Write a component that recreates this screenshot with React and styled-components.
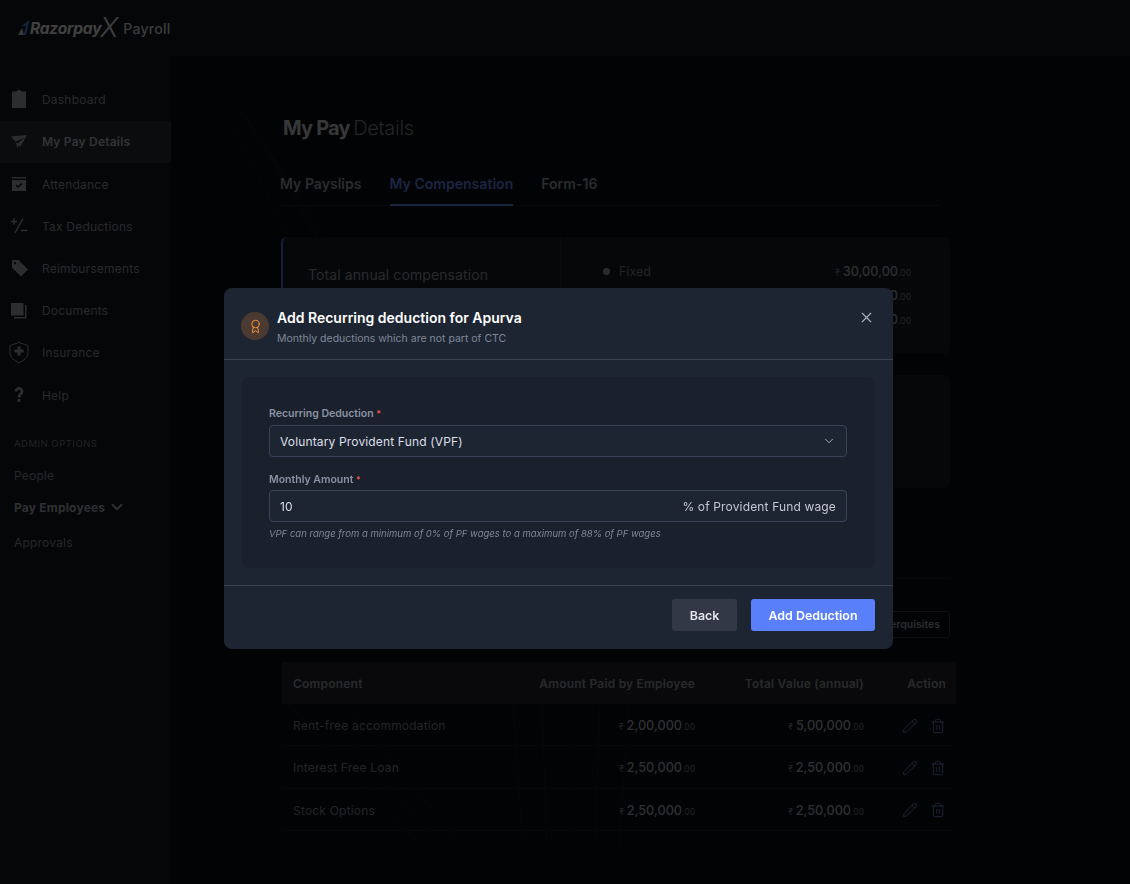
import styled, { createGlobalStyle } from 'styled-components';
import { ChevronDown, Pencil, Trash2, X, Award } from 'lucide-react';

const GlobalStyle = createGlobalStyle`
	html, body {
		margin: 0;
		padding: 0;
		background: #080c14;
		font-family: Inter, "Liberation Sans", sans-serif;
	}
	* {
		box-sizing: border-box;
	}
`;

const Page = styled.div`
	width: 1130px;
	height: 884px;
	overflow: hidden;
	display: flex;
	flex-direction: column;
	background: #080c14;
	color: #a8acb4;
`;

const TopBar = styled.header`
	height: 56px;
	flex: none;
	display: flex;
	align-items: center;
	gap: 6px;
	padding-left: 18px;
	background: #141820;
`;

const Brand = styled.div`
	display: flex;
	align-items: center;
	color: #fff;
	font-size: 15.5px;
	font-weight: 700;
	font-style: italic;
	letter-spacing: -0.2px;
`;

const BrandX = styled.span`
	font-size: 27px;
	font-weight: 300;
	line-height: 20px;
	letter-spacing: -1px;
	margin-left: -1px;
`;

const Product = styled.span`
	color: #e4e6ea;
	font-size: 14px;
	font-weight: 500;
	letter-spacing: 0.3px;
`;

const Body = styled.div`
	flex: 1;
	display: flex;
	min-height: 0;
`;

const Sidebar = styled.nav`
	width: 171px;
	flex: none;
	padding-top: 22.6px;
	background: #141820;
`;

const NavRow = styled.div`
	height: 42.2px;
	display: flex;
	align-items: center;
	gap: 15px;
	padding-left: 11px;
	font-size: 12px;
	letter-spacing: 0.2px;
	font-weight: ${(props) => (props.$active ? 600 : 400)};
	background: ${(props) => (props.$active ? '#2c3038' : 'transparent')};
	color: ${(props) => (props.$active ? '#c4c8d0' : '#a0a4ac')};

	& svg {
		width: 16px;
		height: 16px;
		flex: none;
		color: #b0b4bc;
	}
`;

const AdminTitle = styled.div`
	margin: 22px 0 10px 14px;
	font-size: 9.5px;
	letter-spacing: 0.5px;
	color: #888c94;
`;

const AdminLink = styled.div`
	display: flex;
	align-items: center;
	gap: 3px;
	height: ${(props) => props.$height || 32}px;
	padding-left: 14px;
	font-size: 12px;
	letter-spacing: 0.2px;
	font-weight: ${(props) => (props.$bold ? 700 : 400)};
	color: ${(props) => (props.$bold ? '#b8bcc4' : '#989ca4')};
`;

const Main = styled.main`
	flex: 1;
	padding: 58px 180px 0 110px;
	position: relative;
	min-width: 0;
`;

const Lines = styled.svg`
	position: absolute;
	left: 0;
	top: 0;
	width: 100%;
	height: 100%;
	pointer-events: none;
`;

const Title = styled.h1`
	position: relative;
	margin: 0 0 30px 2px;
	font-size: 20px;
	line-height: 28px;
	font-weight: 300;
	letter-spacing: -0.3px;
	word-spacing: -2px;
	color: #8c9098;

	& b {
		font-weight: 700;
		letter-spacing: -0.8px;
		word-spacing: 0;
		color: #d8dadf;
	}
`;

const Tabs = styled.div`
	position: relative;
	width: 660px;
	margin-left: -1px;
	display: flex;
	gap: 28px;
	border-bottom: 1px solid #22262e;
`;

const Tab = styled.div`
	height: 34px;
	padding-top: 2px;
	font-size: 14px;
	font-weight: 600;
	line-height: 20px;
	letter-spacing: 0.03px;
	margin-bottom: -1px;
	color: ${(props) => (props.$active ? '#6f90ff' : '#a8acb4')};
	border-bottom: 2px solid ${(props) => (props.$active ? '#6f90ff' : 'transparent')};
`;

const SummaryCard = styled.section`
	position: relative;
	width: 669px;
	height: 117px;
	margin-top: 31px;
	display: flex;
	background: #181c24;
	border-left: 2px solid #5a78e8;
	border-radius: 6px;
`;

const SummaryLabel = styled.div`
	width: 278px;
	padding: 28px 0 0 25px;
	font-size: 14px;
	line-height: 20px;
	letter-spacing: 0.1px;
	color: #a0a4ac;
	border-right: 1px solid #282c34;
	margin-bottom: 24px;
`;

const SummaryRows = styled.div`
	flex: 1;
	padding: 22px 39px 0 40px;
`;

const SummaryRow = styled.div`
	height: 24px;
	display: flex;
	align-items: center;
	gap: 9px;
	font-size: 12.5px;
	color: #8c9098;
`;

const Dot = styled.span`
	width: 7px;
	height: 7px;
	margin-left: 2px;
	border-radius: 50%;
	background: ${(props) => props.$color};
`;

const Money = styled.div`
	display: flex;
	align-items: baseline;
	justify-content: flex-end;
	margin-left: auto;
	font-size: 12.7px;
	font-weight: 500;
	letter-spacing: 0;
	color: #b8bcc4;

	& i {
		font-style: normal;
		font-size: 8.5px;
		font-weight: 400;
		color: #888c94;
	}

	& i:first-child {
		margin-right: 3px;
	}
`;

const DetailCard = styled.section`
	position: relative;
	width: 669px;
	height: 113px;
	margin-top: 21px;
	background: #181c24;
	border-radius: 6px;
`;

const Divider = styled.div`
	position: relative;
	width: 669px;
	margin-top: 90px;
	border-top: 1px solid #1c2028;
`;

const PerksBar = styled.div`
	position: relative;
	width: 669px;
	display: flex;
	justify-content: flex-end;
	margin-top: 32px;
`;

const OutlineButton = styled.div`
	height: 27px;
	padding: 0 9px;
	display: flex;
	align-items: center;
	font-size: 10.5px;
	font-weight: 600;
	color: #a8acb4;
	border: 1px solid #3c4048;
	border-radius: 3px;
`;

const Table = styled.div`
	position: relative;
	width: 674px;
	margin: 24px 0 0 1px;
`;

const TableRow = styled.div`
	height: 42.2px;
	display: grid;
	grid-template-columns: 234px 168px 169px 1fr;
	align-items: center;
	padding: 2px 10px 0 11px;
	font-size: 12px;
	letter-spacing: 0.2px;
	color: #8c9098;
	border-bottom: 1px solid #1a1e26;
`;

const HeadRow = styled(TableRow)`
	padding-top: 0;
	background: #24272e;
	border-bottom: 0;
	font-weight: 600;
	color: #a0a4ac;
`;

const Cell = styled.div`
	text-align: right;
`;

const ActionCell = styled.div`
	display: flex;
	justify-content: flex-end;
	align-items: center;
	gap: 12px;
	color: #6a8ad0;

	& svg {
		width: 16px;
		height: 16px;
	}
`;

const Backdrop = styled.div`
	position: fixed;
	inset: 0;
	background: rgba(0, 0, 0, 0.75);
	padding: 288px 0 0 224px;
`;

const Modal = styled.div`
	width: 669px;
	height: 361px;
	display: flex;
	flex-direction: column;
	background: #1e2532;
	border-radius: 8px;
	color: #fff;
`;

const ModalHead = styled.div`
	height: 72px;
	flex: none;
	display: flex;
	align-items: center;
	gap: 8px;
	padding: 8px 18px 0 17px;
	border-bottom: 1px solid #3a414e;
`;

const Badge = styled.div`
	width: 28px;
	height: 28px;
	flex: none;
	margin-top: -3px;
	display: flex;
	align-items: center;
	justify-content: center;
	border-radius: 50%;
	background: #4a3a32;
	color: #f0923c;
`;

const HeadText = styled.div`
	flex: 1;
`;

const ModalTitle = styled.div`
	font-size: 14px;
	font-weight: 600;
	line-height: 20px;
	color: #fff;
`;

const ModalSub = styled.div`
	margin-top: 3px;
	font-size: 10.5px;
	line-height: 16px;
	color: #7f8798;
`;

const CloseButton = styled.div`
	display: flex;
	margin: -20px 0 0;
	color: #aeb4c2;
`;

const ModalBody = styled.div`
	flex: 1;
	padding: 17px 18px;
`;

const Panel = styled.div`
	height: 191px;
	padding: 30px 28px 0 27px;
	background: #1a202c;
	border-radius: 8px;
`;

const Label = styled.div`
	margin-bottom: ${(props) => props.$gap}px;
	font-size: 10.5px;
	font-weight: 600;
	line-height: 13px;
	color: #8a92a3;

	& span {
		font-size: 9px;
		color: #e5534b;
	}
`;

const Field = styled.div`
	height: 32px;
	margin-bottom: ${(props) => props.$gap || 0}px;
	display: flex;
	align-items: center;
	justify-content: space-between;
	padding: 0 10px;
	font-size: 12px;
	letter-spacing: 0.15px;
	color: #dcdfe6;
	background: #1e2532;
	border: 1px solid #3a4358;
	border-radius: 4px;

	& svg {
		color: #b4b9c6;
	}
`;

const Suffix = styled.span`
	color: #c4c8d2;
`;

const Hint = styled.div`
	margin-top: 5px;
	font-size: 9.5px;
	font-style: italic;
	line-height: 13px;
	color: #7f8798;
`;

const ModalFoot = styled.div`
	height: 65px;
	flex: none;
	display: flex;
	justify-content: flex-end;
	gap: 14px;
	padding: 13px 18px 0 0;
	border-top: 1px solid #3a414e;
`;

const FootButton = styled.div`
	width: ${(props) => props.$width}px;
	height: 32px;
	display: flex;
	align-items: center;
	justify-content: center;
	font-size: 12.4px;
	font-weight: 600;
	border-radius: 3px;
	color: ${(props) => (props.$primary ? '#fff' : '#e3e6ec')};
	background: ${(props) => (props.$primary ? '#5a7ffb' : '#323846')};
`;

const LogoMark = () => (
	<svg width="12" height="16" viewBox="0 0 12 16" style={{ marginTop: -1 }}>
		<path d="M0 15 L4 8 L6 15 Z" fill="#d8dadf" />
		<path d="M3.5 6 L11.5 0 L8 15 L5.5 15 L8 6 Z" fill="#5a8cf0" />
	</svg>
);

const navIcons = {
	dashboard: (
		<svg viewBox="0 0 16 16" fill="currentColor" style={{ overflow: 'visible' }}>
			<path d="M1-.5h4L8-2.5l3 2h4V16H1Z" />
		</svg>
	),
	pay: (
		<svg viewBox="0 0 16 16" fill="currentColor">
			<path d="M0 2.5 16 1 9 13 6.5 9.5 13 4 4.5 7.5Z" />
			<path d="M4.5 8 6.5 14 8 10.5Z" />
		</svg>
	),
	attendance: (
		<svg viewBox="0 0 16 16" fill="currentColor">
			<path d="M1 1h14v1.5H1Z" />
			<path fillRule="evenodd" d="M1 4h14v11H1Zm3.5 5.5L7 12l4.5-4-1-1L7 10 5.5 8.5Z" />
		</svg>
	),
	tax: (
		<svg viewBox="0 0 16 16" fill="none" stroke="currentColor" strokeWidth="1.5">
			<path d="M0 3.5h6M3 .5v6M12 .5 4 15M10 12.5h6" />
		</svg>
	),
	tag: (
		<svg viewBox="0 0 16 16" fill="currentColor" style={{ overflow: 'visible' }}>
			<path d="M1 0h6.5L17 9.5 10 16.5 1 7.5Zm3 2a1.2 1.2 0 1 0 .01 0Z" />
		</svg>
	),
	documents: (
		<svg viewBox="0 0 16 16" fill="currentColor">
			<path d="M0 0h12.5v12.5H0Z" />
			<path d="M14 2h1.5v13.5H3V14h11Z" />
		</svg>
	),
	insurance: (
		<svg viewBox="0 0 16 16" style={{ overflow: 'visible' }}>
			<path
				d="M8-2.5 17 .5V8c0 4.5-4.5 7.5-9 10-4.5-2.5-9-5.5-9-10V.5Z"
				fill="none"
				stroke="currentColor"
				strokeWidth="1"
			/>
			<path d="M6.5 1.5h3v3h3v3h-3v3h-3v-3h-3v-3h3Z" fill="currentColor" />
		</svg>
	),
	help: (
		<svg viewBox="0 0 16 16" fill="none" stroke="currentColor" strokeWidth="2.8">
			<path d="M5 4.5a3 3 0 1 1 4.8 2.4C8.5 7.9 8 8.5 8 10.5" />
			<path d="M8 12v3" />
		</svg>
	),
};

const navItems = [
	{ key: 'dashboard', label: 'Dashboard' },
	{ key: 'pay', label: 'My Pay Details', active: true },
	{ key: 'attendance', label: 'Attendance' },
	{ key: 'tax', label: 'Tax Deductions' },
	{ key: 'tag', label: 'Reimbursements' },
	{ key: 'documents', label: 'Documents' },
	{ key: 'insurance', label: 'Insurance' },
	{ key: 'help', label: 'Help' },
];

const summaryRows = [
	{ label: 'Fixed', amount: '30,00,00', color: '#a8acb4' },
	{ label: 'Variable', amount: '5,00,00', color: '#6f90ff' },
	{ label: 'Perquisites', amount: '2,00,00', color: '#5cc8a0' },
];

const perquisites = [
	{ name: 'Rent-free accommodation', paid: '2,00,000', total: '5,00,000' },
	{ name: 'Interest Free Loan', paid: '2,50,000', total: '2,50,000' },
	{ name: 'Stock Options', paid: '2,50,000', total: '2,50,000' },
];

const Amount = ({ value }) => (
	<Money>
		<i>₹</i>
		{value}
		<i>.00</i>
	</Money>
);

const App = () => (
	<>
		<GlobalStyle />
		<Page>
			<TopBar>
				<Brand>
					<LogoMark />
					Razorpay
					<BrandX>X</BrandX>
				</Brand>
				<Product>Payroll</Product>
			</TopBar>
			<Body>
				<Sidebar>
					{navItems.map((item) => (
						<NavRow key={item.key} $active={item.active}>
							{navIcons[item.key]}
							{item.label}
						</NavRow>
					))}
					<AdminTitle>ADMIN OPTIONS</AdminTitle>
					<AdminLink>People</AdminLink>
					<AdminLink $bold>
						Pay Employees
						<ChevronDown size={18} strokeWidth={2.5} />
					</AdminLink>
					<AdminLink $height={38}>Approvals</AdminLink>
				</Sidebar>
				<Main>
					<Lines viewBox="0 0 959 828" fill="none" stroke="#161b24" strokeWidth="1">
						<path d="M60 40 L200 250 M75 60 L180 240 M90 80 L170 220 M60 70 L150 240" />
						<path d="M340 620 L352 790 M370 620 L376 790 M400 620 L400 790 M430 620 L424 790 M460 620 L448 790" />
						<path d="M110 640 L250 790 M140 640 L270 790 M170 640 L290 790" />
					</Lines>
					<Title>
						<b>My Pay</b> Details
					</Title>
					<Tabs>
						<Tab>My Payslips</Tab>
						<Tab $active>My Compensation</Tab>
						<Tab>Form-16</Tab>
					</Tabs>
					<SummaryCard>
						<SummaryLabel>Total annual compensation</SummaryLabel>
						<SummaryRows>
							{summaryRows.map((row) => (
								<SummaryRow key={row.label}>
									<Dot $color={row.color} />
									{row.label}
									<Amount value={row.amount} />
								</SummaryRow>
							))}
						</SummaryRows>
					</SummaryCard>
					<DetailCard />
					<Divider />
					<PerksBar>
						<OutlineButton>Add Perquisites</OutlineButton>
					</PerksBar>
					<Table>
						<HeadRow>
							<div>Component</div>
							<Cell>Amount Paid by Employee</Cell>
							<Cell>Total Value (annual)</Cell>
							<Cell>Action</Cell>
						</HeadRow>
						{perquisites.map((row) => (
							<TableRow key={row.name}>
								<div>{row.name}</div>
								<Amount value={row.paid} />
								<Amount value={row.total} />
								<ActionCell>
									<Pencil strokeWidth={1.5} />
									<Trash2 strokeWidth={1.5} />
								</ActionCell>
							</TableRow>
						))}
					</Table>
				</Main>
			</Body>
		</Page>
		<Backdrop>
			<Modal>
				<ModalHead>
					<Badge>
						<Award size={15} strokeWidth={1.6} />
					</Badge>
					<HeadText>
						<ModalTitle>Add Recurring deduction for Apurva</ModalTitle>
						<ModalSub>Monthly deductions which are not part of CTC</ModalSub>
					</HeadText>
					<CloseButton>
						<X size={17} strokeWidth={1.5} />
					</CloseButton>
				</ModalHead>
				<ModalBody>
					<Panel>
						<Label $gap={5}>
							Recurring Deduction <span>*</span>
						</Label>
						<Field $gap={16}>
							Voluntary Provident Fund (VPF)
							<ChevronDown size={14} strokeWidth={1.5} />
						</Field>
						<Label $gap={4}>
							Monthly Amount <span>*</span>
						</Label>
						<Field>
							10
							<Suffix>% of Provident Fund wage</Suffix>
						</Field>
						<Hint>VPF can range from a minimum of 0% of PF wages to a maximum of 88% of PF wages</Hint>
					</Panel>
				</ModalBody>
				<ModalFoot>
					<FootButton $width={65}>Back</FootButton>
					<FootButton $width={124} $primary>
						Add Deduction
					</FootButton>
				</ModalFoot>
			</Modal>
		</Backdrop>
	</>
);

export default App;
